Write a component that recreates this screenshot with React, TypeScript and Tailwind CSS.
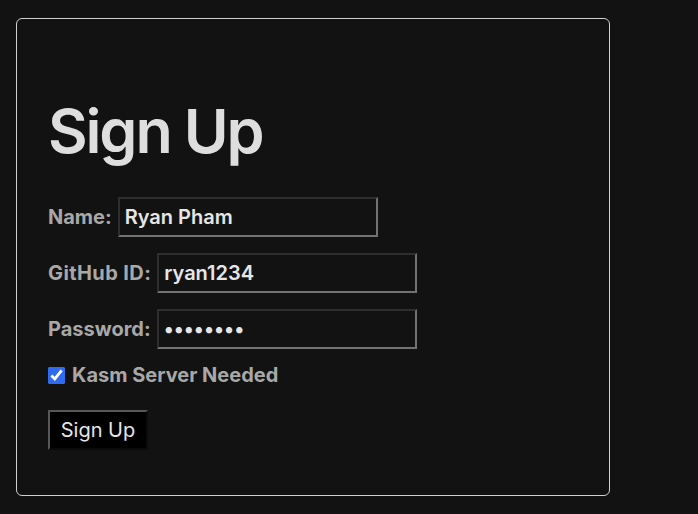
import React, { useState } from 'react'

export default function App() {
  const [name, setName] = useState('Ryan Pham')
  const [github, setGithub] = useState('ryan1234')
  const [password, setPassword] = useState('password')
  const [kasm, setKasm] = useState(true)

  const inputCls =
    "h-[40px] w-[260px] bg-[#121212] px-[5px] text-[20px] font-semibold text-[#e6e6e6] outline-none border-2 border-t-[#2e2e2e] border-l-[#2e2e2e] border-b-[#727272] border-r-[#727272]"

  return (
    <div className="min-h-[514px] w-full bg-[#121212] pt-[18px] pl-[16px] font-['Inter',sans-serif]">
      <div className="flex h-[478px] w-[594px] flex-col rounded-[6px] border border-[#d0d0d0] pl-[31px] pt-[77px]">
        <h1 className="text-[61px] font-semibold leading-[70px] tracking-[-0.035em] text-[#dedede]">Sign Up</h1>

        <form className="mt-[31px] flex flex-col" onSubmit={(e) => e.preventDefault()}>
          <div className="flex items-center gap-[6px]">
            <label className="text-[20px] font-bold text-[#a8a8a8]">Name:</label>
            <input className={inputCls} value={name} onChange={(e) => setName(e.target.value)} />
          </div>

          <div className="mt-[16px] flex items-center gap-[6px]">
            <label className="text-[20px] font-bold tracking-[0.02em] text-[#a8a8a8]">GitHub ID:</label>
            <input className={inputCls} value={github} onChange={(e) => setGithub(e.target.value)} />
          </div>

          <div className="mt-[16px] flex items-center gap-[6px]">
            <label className="text-[20px] font-bold text-[#a8a8a8]">Password:</label>
            <input
              type="password"
              className={inputCls}
              value={password}
              onChange={(e) => setPassword(e.target.value)}
            />
          </div>

          <label className="mt-[11px] flex items-center gap-[7px] text-[20px] font-bold text-[#a8a8a8]">
            <input
              type="checkbox"
              checked={kasm}
              onChange={(e) => setKasm(e.target.checked)}
              className="h-[17px] w-[17px] accent-[#2f6bf0]"
            />
            Kasm Server Needed
          </label>

          <div className="mt-[20px]">
            <button
              type="submit"
              className="h-[40px] w-[100px] bg-black text-[20px] text-[#e6e6e6] border-2 border-t-[#575757] border-l-[#575757] border-b-[#0a0a0a] border-r-[#0a0a0a]"
            >
              Sign Up
            </button>
          </div>
        </form>
      </div>
    </div>
  )
}
